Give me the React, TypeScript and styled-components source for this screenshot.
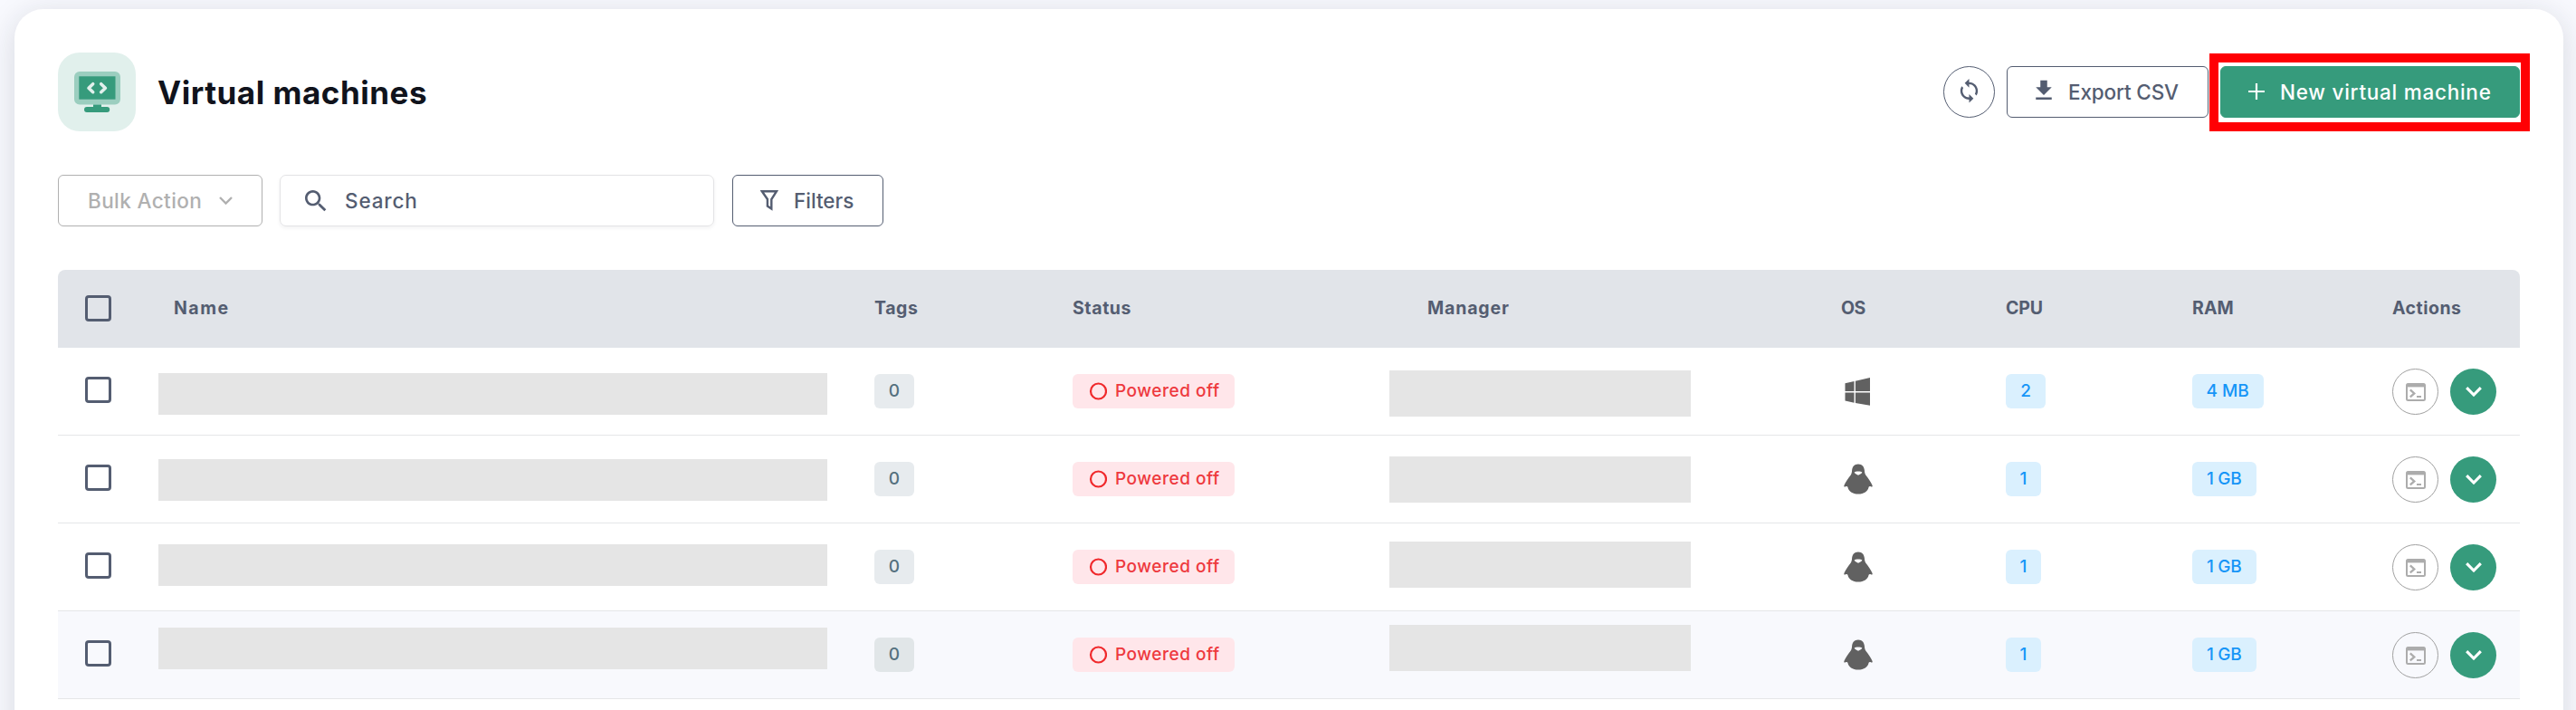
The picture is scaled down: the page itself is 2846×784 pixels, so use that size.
import React from 'react';
import styled, { createGlobalStyle } from 'styled-components';

const ink = '#545d71';
const green = '#369b7c';

const GlobalStyle = createGlobalStyle`
  * { box-sizing: border-box; }
  body {
    margin: 0;
    background: #f8f9fe;
    font-family: Inter, "Open Sans", sans-serif;
    color: ${ink};
  }
  svg { display: block; flex: none; }
`;

const Page = styled.div`
  height: 784px;
  padding: 10px 14px 0 16px;
  overflow: hidden;
`;

const Card = styled.main`
  height: 900px;
  padding: 48px 48px 0;
  background: #fff;
  border-radius: 32px;
  box-shadow: 0 6px 34px rgba(30, 36, 50, 0.15);
`;

const Header = styled.header`
  display: flex;
  align-items: center;
  height: 87px;
`;

const IconTile = styled.div`
  display: flex;
  align-items: center;
  justify-content: center;
  width: 86px;
  height: 87px;
  border-radius: 24px;
  background: #e1f0ec;
`;

const Title = styled.h1`
  margin: 0 auto 0 24px;
  color: #10131c;
  font-size: 35px;
  font-weight: 700;
  line-height: 40px;
  letter-spacing: 0.53px;
`;

const HeaderActions = styled.div`
  display: flex;
  align-items: center;
`;

const RoundButton = styled.button<{ $size: number; $tone: 'dark' | 'muted' | 'solid' }>`
  display: flex;
  align-items: center;
  justify-content: center;
  width: ${(p) => p.$size}px;
  height: ${(p) => p.$size}px;
  padding: 0;
  border-radius: 50%;
  border: ${(p) => (p.$tone === 'solid' ? 'none' : `1px solid ${p.$tone === 'dark' ? ink : '#a0a0a0'}`)};
  background: ${(p) => (p.$tone === 'solid' ? green : 'transparent')};
  color: ${(p) => (p.$tone === 'solid' ? '#fff' : p.$tone === 'dark' ? ink : '#acacac')};
`;

const Button = styled.button<{ $width: number; $pad: number; $gap: number; $track?: number; $tone?: 'primary' | 'disabled' }>`
  display: flex;
  align-items: center;
  gap: ${(p) => p.$gap}px;
  width: ${(p) => p.$width}px;
  height: 57px;
  padding: 0 0 0 ${(p) => p.$pad}px;
  border-radius: 6px;
  border: 1px solid ${(p) => (p.$tone === 'primary' ? green : p.$tone === 'disabled' ? '#b0b0b0' : ink)};
  background: ${(p) => (p.$tone === 'primary' ? green : '#fff')};
  color: ${(p) => (p.$tone === 'primary' ? '#fff' : p.$tone === 'disabled' ? '#b0b0b0' : ink)};
  font: 500 22.5px/28px Inter, "Open Sans", sans-serif;
  letter-spacing: ${(p) => p.$track ?? 0}px;
  white-space: nowrap;
`;

const ExportSlot = styled.div`
  margin: 0 13px;
`;

const Highlighted = styled.div`
  position: relative;
  &::after {
    content: '';
    position: absolute;
    top: -14px;
    right: -11px;
    bottom: -15px;
    left: -12px;
    border: 10px solid #ff0004;
  }
`;

const Toolbar = styled.div`
  display: flex;
  margin-top: 48px;
`;

const SearchBox = styled.div`
  display: flex;
  align-items: center;
  width: 480px;
  height: 57px;
  margin: 0 20px 0 19px;
  padding-left: 23px;
  gap: 16px;
  border: 1px solid #e3e3e5;
  border-radius: 7px;
  box-shadow: 0 2px 4px rgba(30, 36, 50, 0.06);
  font-size: 22.5px;
  font-weight: 500;
  letter-spacing: 0.85px;
`;

const Table = styled.section`
  margin-top: 48px;
`;

const columns = '111px 791px 219px 350px 499px 182px 206px 221px 141px';

const HeadRow = styled.div`
  display: grid;
  grid-template-columns: ${columns};
  align-items: center;
  height: 86px;
  padding-bottom: 2px;
  border-radius: 8px 8px 0 0;
  background: #e1e4e9;
`;

const Row = styled.div<{ $hovered?: boolean }>`
  display: grid;
  grid-template-columns: ${columns};
  align-items: center;
  height: 97px;
  border-bottom: 1px solid #e5e6e8;
  background: ${(p) => (p.$hovered ? '#f8f9fd' : '#fff')};
`;

const HeadCell = styled.div<{ $indent?: number; $track: number }>`
  padding-left: ${(p) => p.$indent ?? 0}px;
  font-size: 19.5px;
  font-weight: 700;
  letter-spacing: ${(p) => p.$track}px;
`;

const Checkbox = styled.div<{ $lift?: number }>`
  width: 29px;
  height: 29px;
  margin: 0 0 ${(p) => p.$lift ?? 0}px 30px;
  border: 3px solid ${ink};
  border-radius: 4px;
`;

const Redacted = styled.div<{ $width: number; $height: number; $top: number }>`
  align-self: start;
  width: ${(p) => p.$width}px;
  height: ${(p) => p.$height}px;
  margin-top: ${(p) => p.$top}px;
  background: #e5e5e5;
`;

const tones = {
  grey: ['#e7ebee', '#54707f'],
  greyHover: ['#e1e6e8', '#54707f'],
  red: ['#ffe6ea', '#ee393e'],
  blue: ['#daf0fe', '#1695f7'],
};

const Badge = styled.div<{ $tone: keyof typeof tones; $width: number; $pad?: number; $track?: number }>`
  display: flex;
  align-items: center;
  justify-content: ${(p) => (p.$pad === undefined ? 'center' : 'flex-start')};
  gap: 9px;
  width: ${(p) => p.$width}px;
  height: 38px;
  padding: 0 0 1px ${(p) => p.$pad ?? 0}px;
  border-radius: 6px;
  background: ${(p) => tones[p.$tone][0]};
  color: ${(p) => tones[p.$tone][1]};
  font-size: 19px;
  font-weight: 500;
  letter-spacing: ${(p) => p.$track ?? 0}px;
  white-space: nowrap;
`;

const RowActions = styled.div`
  display: flex;
  gap: 13px;
  padding-top: 1px;
`;

const MonitorIcon = () => (
  <svg width="86" height="87" viewBox="0 0 86 87">
    <rect x="18" y="21" width="51" height="36.5" rx="6" fill="#9bcebf" />
    <rect x="23.3" y="26.3" width="40.2" height="25.4" fill={green} />
    <path d="M39 57.5h9v2.5h6.200a3 3 0 0 1 0 6H32a3 3 0 0 1 0-6h7z" fill={green} />
    <path d="M38.700 34.700l-4.700 4.500 4.700 4.500M47.700 34.700l4.700 4.500-4.700 4.500" fill="none" stroke="#e1f0ec" strokeWidth="3.600" strokeLinecap="round" strokeLinejoin="round" />
  </svg>
);

const SyncIcon = () => (
  <svg width="29" height="29" viewBox="0 0 24 24" fill="currentColor">
    <path d="M12 4V1L8 5l4 4V6c3.31 0 6 2.69 6 6 0 1.01-.25 1.97-.7 2.8l1.46 1.46C19.54 15.03 20 13.57 20 12c0-4.42-3.58-8-8-8zm0 14c-3.31 0-6-2.69-6-6 0-1.01.25-1.97.7-2.8L5.24 7.74C4.46 8.97 4 10.43 4 12c0 4.42 3.58 8 8 8v3l4-4-4-4v3z" transform="translate(0 -1)" />
  </svg>
);

const DownloadIcon = () => (
  <svg width="30" height="34" viewBox="0 0 24 27.2" fill="currentColor">
    <path d="M19 9h-4V3H9v6H5l7 7 7-7zM5 18v2h14v-2H5z" />
  </svg>
);

const PlusIcon = () => (
  <svg width="18" height="20" viewBox="0 0 18 20">
    <path d="M9 0v18M0 9h18" stroke="currentColor" strokeWidth="2.200" />
  </svg>
);

const ChevronIcon = ({ width = 15, stroke = 2.4 }: { width?: number; stroke?: number }) => (
  <svg width={width} height={width * 0.6} viewBox="0 0 15 9">
    <path d="M1 1l6.500 6.500L14 1" fill="none" stroke="currentColor" strokeWidth={stroke} />
  </svg>
);

const SearchIcon = () => (
  <svg width="32" height="32" viewBox="0 0 24 24" fill="currentColor">
    <path d="M15.5 14h-.79l-.28-.27C15.41 12.59 16 11.11 16 9.5 16 5.91 13.09 3 9.5 3S3 5.91 3 9.5 5.91 16 9.5 16c1.61 0 3.090-.59 4.230-1.570l.27.28v.79l5 4.990L20.490 19l-4.990-5zm-6 0C7.010 14 5 11.990 5 9.500S7.010 5 9.500 5 14 7.010 14 9.500 11.990 14 9.500 14z" />
  </svg>
);

const FilterIcon = () => (
  <svg width="20" height="26" viewBox="0 0 20 26">
    <path d="M1.800 2.200h16.200L12.300 11v10.500L7.900 18.500V11z" fill="none" stroke="currentColor" strokeWidth="2.400" />
  </svg>
);

const WindowsIcon = () => (
  <svg width="36" height="36" viewBox="0 0 36 36" fill="#616161">
    <path d="M4.500 9.300L14.500 7v11H4.500zM15.900 6.700L32 3v15H15.900zM4.500 19.500h10v11.200L4.500 28.600zM15.900 19.500H32v14.300l-16.100-2.900z" />
  </svg>
);

const PenguinIcon = () => (
  <svg width="36" height="36" viewBox="0 0 36 36" fill="#616161">
    <path
      fillRule="evenodd"
      d="M19 1.500c4.600 0 6.500 3.300 6.900 6.800.2 2.400.4 3.900 1.500 5.500 3 3.800 5.300 7 7.200 11.200.3 1.300-.1 1.800-1.300 1.500-1.200-.6-2.300-.5-2.700.3C29.700 31.500 25.400 34.600 19 34.600S8.300 31.500 7.400 26.800c-.4-.8-1.500-.9-2.700-.3-1.200.3-1.600-.2-1.300-1.500 1.900-4.200 4.200-7.400 7.200-11.200 1.100-1.600 1.300-3.100 1.500-5.500.4-3.500 2.300-6.800 6.900-6.800zM14.700 10.500c.4 1.700 2.300 2.200 4.300 3.200 2-1 3.900-1.500 4.300-3.200-.6-.8-2.500-1-4.300-1s-3.700.2-4.300 1z"
    />
  </svg>
);

const ConsoleIcon = () => (
  <svg width="22" height="20" viewBox="0 0 22 20" fill="none" stroke="currentColor">
    <rect x="1" y="1" width="20" height="18" rx="1.500" strokeWidth="2" />
    <path d="M1 2.600h20" strokeWidth="3.600" />
    <path d="M4.800 7.400l4.500 4-4.500 4" strokeWidth="2.300" />
    <path d="M12 15h5" strokeWidth="2" />
  </svg>
);

const CircleIcon = () => (
  <svg width="20" height="20" viewBox="0 0 20 20">
    <circle cx="10.500" cy="10" r="8.500" fill="none" stroke="#f0282b" strokeWidth="2.200" />
  </svg>
);

const headings = [
  { label: 'Name', indent: 17, track: 1.5 },
  { label: 'Tags', track: 0.6 },
  { label: 'Status', track: 0.6 },
  { label: 'Manager', indent: 42, track: 0.85 },
  { label: 'OS', track: -0.5 },
  { label: 'CPU', track: -0.2 },
  { label: 'RAM', indent: -1, track: 0.1 },
  { label: 'Actions', track: 0.5 },
];

const machines = [
  { os: 'windows', cpu: '2', ram: '4 MB', nameTop: 28, managerTop: 25 },
  { os: 'linux', cpu: '1', ram: '1 GB', nameTop: 26, managerTop: 23 },
  { os: 'linux', cpu: '1', ram: '1 GB', nameTop: 23, managerTop: 20 },
  { os: 'linux', cpu: '1', ram: '1 GB', nameTop: 18, managerTop: 15, hovered: true },
];

export default function App() {
  return (
    <Page>
      <GlobalStyle />
      <Card>
        <Header>
          <IconTile>
            <MonitorIcon />
          </IconTile>
          <Title>Virtual machines</Title>
          <HeaderActions>
            <RoundButton $size={57} $tone="dark" aria-label="Refresh">
              <SyncIcon />
            </RoundButton>
            <ExportSlot>
              <Button $width={223} $pad={25} $gap={12} $track={-0.15}>
                <DownloadIcon />
                Export CSV
              </Button>
            </ExportSlot>
            <Highlighted>
              <Button $width={331} $pad={30} $gap={17} $track={0.74} $tone="primary">
                <PlusIcon />
                New virtual machine
              </Button>
            </Highlighted>
          </HeaderActions>
        </Header>

        <Toolbar>
          <Button $width={226} $pad={32} $gap={19} $track={0.4} $tone="disabled">
            Bulk Action
            <ChevronIcon />
          </Button>
          <SearchBox>
            <SearchIcon />
            Search
          </SearchBox>
          <Button $width={167} $pad={30} $gap={17} $track={0}>
            <FilterIcon />
            Filters
          </Button>
        </Toolbar>

        <Table>
          <HeadRow>
            <Checkbox />
            {headings.map((h) => (
              <HeadCell key={h.label} $indent={h.indent} $track={h.track}>
                {h.label}
              </HeadCell>
            ))}
          </HeadRow>
          {machines.map((m, i) => (
            <Row key={i} $hovered={m.hovered}>
              <Checkbox $lift={3} />
              <Redacted $width={739} $height={46} $top={m.nameTop} />
              <Badge $tone={m.hovered ? 'greyHover' : 'grey'} $width={44}>
                0
              </Badge>
              <Badge $tone="red" $width={179} $pad={18} $track={0.53}>
                <CircleIcon />
                Powered off
              </Badge>
              <Redacted $width={333} $height={51} $top={m.managerTop} />
              {m.os === 'windows' ? <WindowsIcon /> : <PenguinIcon />}
              <Badge $tone="blue" $width={m.cpu === '2' ? 44 : 39}>
                {m.cpu}
              </Badge>
              <Badge $tone="blue" $width={m.ram === '4 MB' ? 79 : 71} $pad={m.ram === '4 MB' ? 15.5 : 16} $track={m.ram === '4 MB' ? 0 : -0.3}>
                {m.ram}
              </Badge>
              <RowActions>
                <RoundButton $size={51} $tone="muted" aria-label="Console">
                  <ConsoleIcon />
                </RoundButton>
                <RoundButton $size={51} $tone="solid" aria-label="More">
                  <ChevronIcon width={18} stroke={2.6} />
                </RoundButton>
              </RowActions>
            </Row>
          ))}
        </Table>
      </Card>
    </Page>
  );
}
